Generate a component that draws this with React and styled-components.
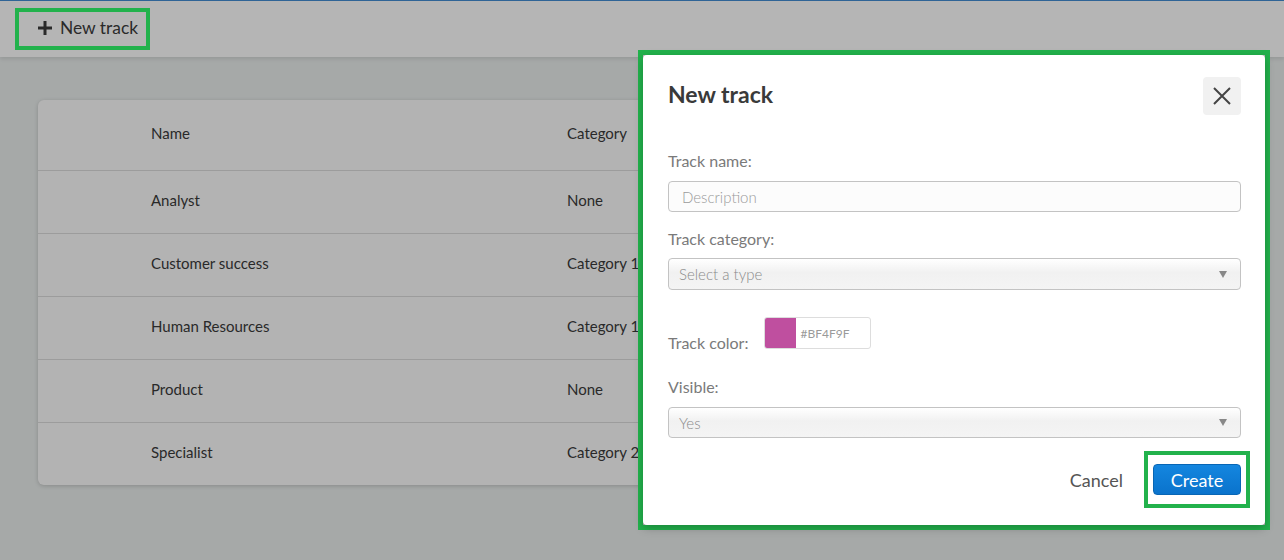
import React from 'react'
import styled, { createGlobalStyle } from 'styled-components'

const GlobalStyle = createGlobalStyle`
  html, body {
    margin: 0;
    padding: 0;
    background: #eaeeed;
    font-family: Lato, 'Open Sans', Arial, sans-serif;
  }
`

const tracks = [
  { name: 'Analyst', category: 'None' },
  { name: 'Customer success', category: 'Category 1' },
  { name: 'Human Resources', category: 'Category 1' },
  { name: 'Product', category: 'None' },
  { name: 'Specialist', category: 'Category 2' },
]

const Page = styled.div`
  position: relative;
  width: 1284px;
  height: 560px;
  overflow: hidden;
  border-top: 1px solid #2f6496;
  box-sizing: border-box;
`

const Header = styled.header`
  height: 56px;
  background: #fff;
  box-shadow: 0 2px 4px rgba(0, 0, 0, 0.1);
  padding: 7px 0 0 15px;
  box-sizing: border-box;
`

/* annotation box, sits above the backdrop so its green stays bright */
const Highlight = styled.div`
  position: relative;
  z-index: 2;
  display: inline-flex;
  border: 4px solid #22b24c;
  background: #b5b5b5;
`

const AddButton = styled.button`
  display: flex;
  align-items: center;
  gap: 8px;
  height: 34px;
  padding: 0 8px 3px 19px;
  border: none;
  background: transparent;
  font-family: Lato, sans-serif;
  font-size: 17.4px;
  color: #2a2a2a;
  cursor: pointer;
`

const Main = styled.main`
  padding: 43px 38px 0 38px;
`

const Card = styled.div`
  background: #fdfdfd;
  border-radius: 6px;
  box-shadow: 0 1px 4px rgba(0, 0, 0, 0.18);
`

const Row = styled.div`
  display: grid;
  grid-template-columns: 113px 416px 1fr;
  align-items: center;
  height: ${(p) => (p.$head ? '70px' : '63px')};
  padding-bottom: 4px;
  border-top: ${(p) => (p.$head ? 'none' : '1px solid #dcdcdc')};
  box-sizing: border-box;
  font-size: 15px;
  color: #3a3a3a;
`

const Backdrop = styled.div`
  position: absolute;
  inset: 0;
  background: rgba(0, 0, 0, 0.29);
`

const ModalFrame = styled.div`
  position: absolute;
  z-index: 3;
  left: 638px;
  top: 49px;
  border: 5px solid #22b24c;
`

const Modal = styled.div`
  width: 622px;
  height: 470px;
  background: #fff;
  border-radius: 4px;
  box-shadow: 0 3px 10px rgba(0, 0, 0, 0.25);
  padding: 22px 24px 0 25px;
  box-sizing: border-box;
  display: flex;
  flex-direction: column;
`

const ModalHead = styled.div`
  display: flex;
  align-items: center;
  justify-content: space-between;
  margin-bottom: 36px;
`

const Title = styled.h2`
  margin: -5px 0 0 0;
  font-size: 23px;
  font-weight: 700;
  color: #3a3a3a;
`

const CloseButton = styled.button`
  width: 38px;
  height: 38px;
  border: none;
  border-radius: 4px;
  background: #f1f1f1;
  display: flex;
  align-items: center;
  justify-content: center;
  padding: 0;
  cursor: pointer;
`

const Label = styled.div`
  font-size: 16px;
  line-height: 20px;
  color: #7a7a7a;
  margin-bottom: ${(p) => p.$mb ?? 10}px;
  margin-top: ${(p) => p.$mt || 0}px;
`

const TextInput = styled.div`
  height: 31px;
  border: 1px solid #c3c3c3;
  border-radius: 4px;
  box-sizing: border-box;
  padding: 0 13px;
  display: flex;
  align-items: center;
  font-size: 15px;
  font-weight: 300;
  color: #9a9a9a;
  background: #fcfcfc;
`

const Select = styled.div`
  height: ${(p) => p.$h || 32}px;
  border: 1px solid #c3c3c3;
  border-radius: 4px;
  box-sizing: border-box;
  padding: 0 13px 0 10px;
  display: flex;
  align-items: center;
  justify-content: space-between;
  font-size: 15px;
  font-weight: 300;
  color: #8a8a8a;
  background: linear-gradient(#ffffff 0%, #f1f1f1 45%, #f4f4f4 100%);
`

const Caret = styled.span`
  width: 0;
  height: 0;
  border-left: 4px solid transparent;
  border-right: 4px solid transparent;
  border-top: 7px solid #888;
`

const ColorRow = styled.div`
  display: flex;
  align-items: flex-end;
  gap: 16px;
  margin-top: 27px;
`

const ColorInput = styled.div`
  display: flex;
  width: 107px;
  height: 32px;
  border: 1px solid #ddd;
  border-radius: 3px;
  box-sizing: border-box;
  overflow: hidden;
`

const Swatch = styled.div`
  width: 31px;
  background: ${(p) => p.$color};
`

const HexText = styled.span`
  display: flex;
  align-items: center;
  padding-left: 4px;
  font-size: 12px;
  color: #9a9a9a;
`

const Footer = styled.div`
  display: flex;
  justify-content: flex-end;
  align-items: center;
  gap: 30px;
  margin-top: 26px;
`

const CancelButton = styled.button`
  border: none;
  background: transparent;
  padding: 0;
  font-family: Lato, sans-serif;
  font-size: 18px;
  color: #555;
  cursor: pointer;
`

const ButtonHighlight = styled.div`
  border: 4px solid #22b24c;
  padding: 9px 5px;
  margin: -13px -9px;
  background: #fff;
`

const CreateButton = styled.button`
  display: block;
  width: 88px;
  height: 31px;
  border: 1px solid #0866b5;
  border-radius: 4px;
  background: linear-gradient(#1486df, #0a73cc);
  color: #fff;
  font-family: Lato, sans-serif;
  font-size: 18px;
  padding: 0;
  cursor: pointer;
`

export default function App() {
  return (
    <>
      <GlobalStyle />
      <Page>
        <Header>
          <Highlight>
            <AddButton>
              <svg width="14" height="14" viewBox="0 0 14 14">
                <path d="M7 0v14M0 7h14" stroke="#2a2a2a" strokeWidth="3" />
              </svg>
              New track
            </AddButton>
          </Highlight>
        </Header>
        <Main>
          <Card>
            <Row $head>
              <span />
              <span>Name</span>
              <span>Category</span>
            </Row>
            {tracks.map((t) => (
              <Row key={t.name}>
                <span />
                <span>{t.name}</span>
                <span>{t.category}</span>
              </Row>
            ))}
          </Card>
        </Main>
        <Backdrop />
        <ModalFrame>
          <Modal>
            <ModalHead>
              <Title>New track</Title>
              <CloseButton aria-label="Close">
                <svg width="18" height="18" viewBox="0 0 18 18">
                  <path d="M1 1l16 16M17 1L1 17" stroke="#444" strokeWidth="2" />
                </svg>
              </CloseButton>
            </ModalHead>
            <Label>Track name:</Label>
            <TextInput>Description</TextInput>
            <Label $mt={17} $mb={9}>Track category:</Label>
            <Select>
              Select a type
              <Caret />
            </Select>
            <ColorRow>
              <Label $mb={-4}>Track color:</Label>
              <ColorInput>
                <Swatch $color="#BF4F9F" />
                <HexText>#BF4F9F</HexText>
              </ColorInput>
            </ColorRow>
            <Label $mt={28} $mb={10}>Visible:</Label>
            <Select $h={31}>
              Yes
              <Caret />
            </Select>
            <Footer>
              <CancelButton>Cancel</CancelButton>
              <ButtonHighlight>
                <CreateButton>Create</CreateButton>
              </ButtonHighlight>
            </Footer>
          </Modal>
        </ModalFrame>
      </Page>
    </>
  )
}
